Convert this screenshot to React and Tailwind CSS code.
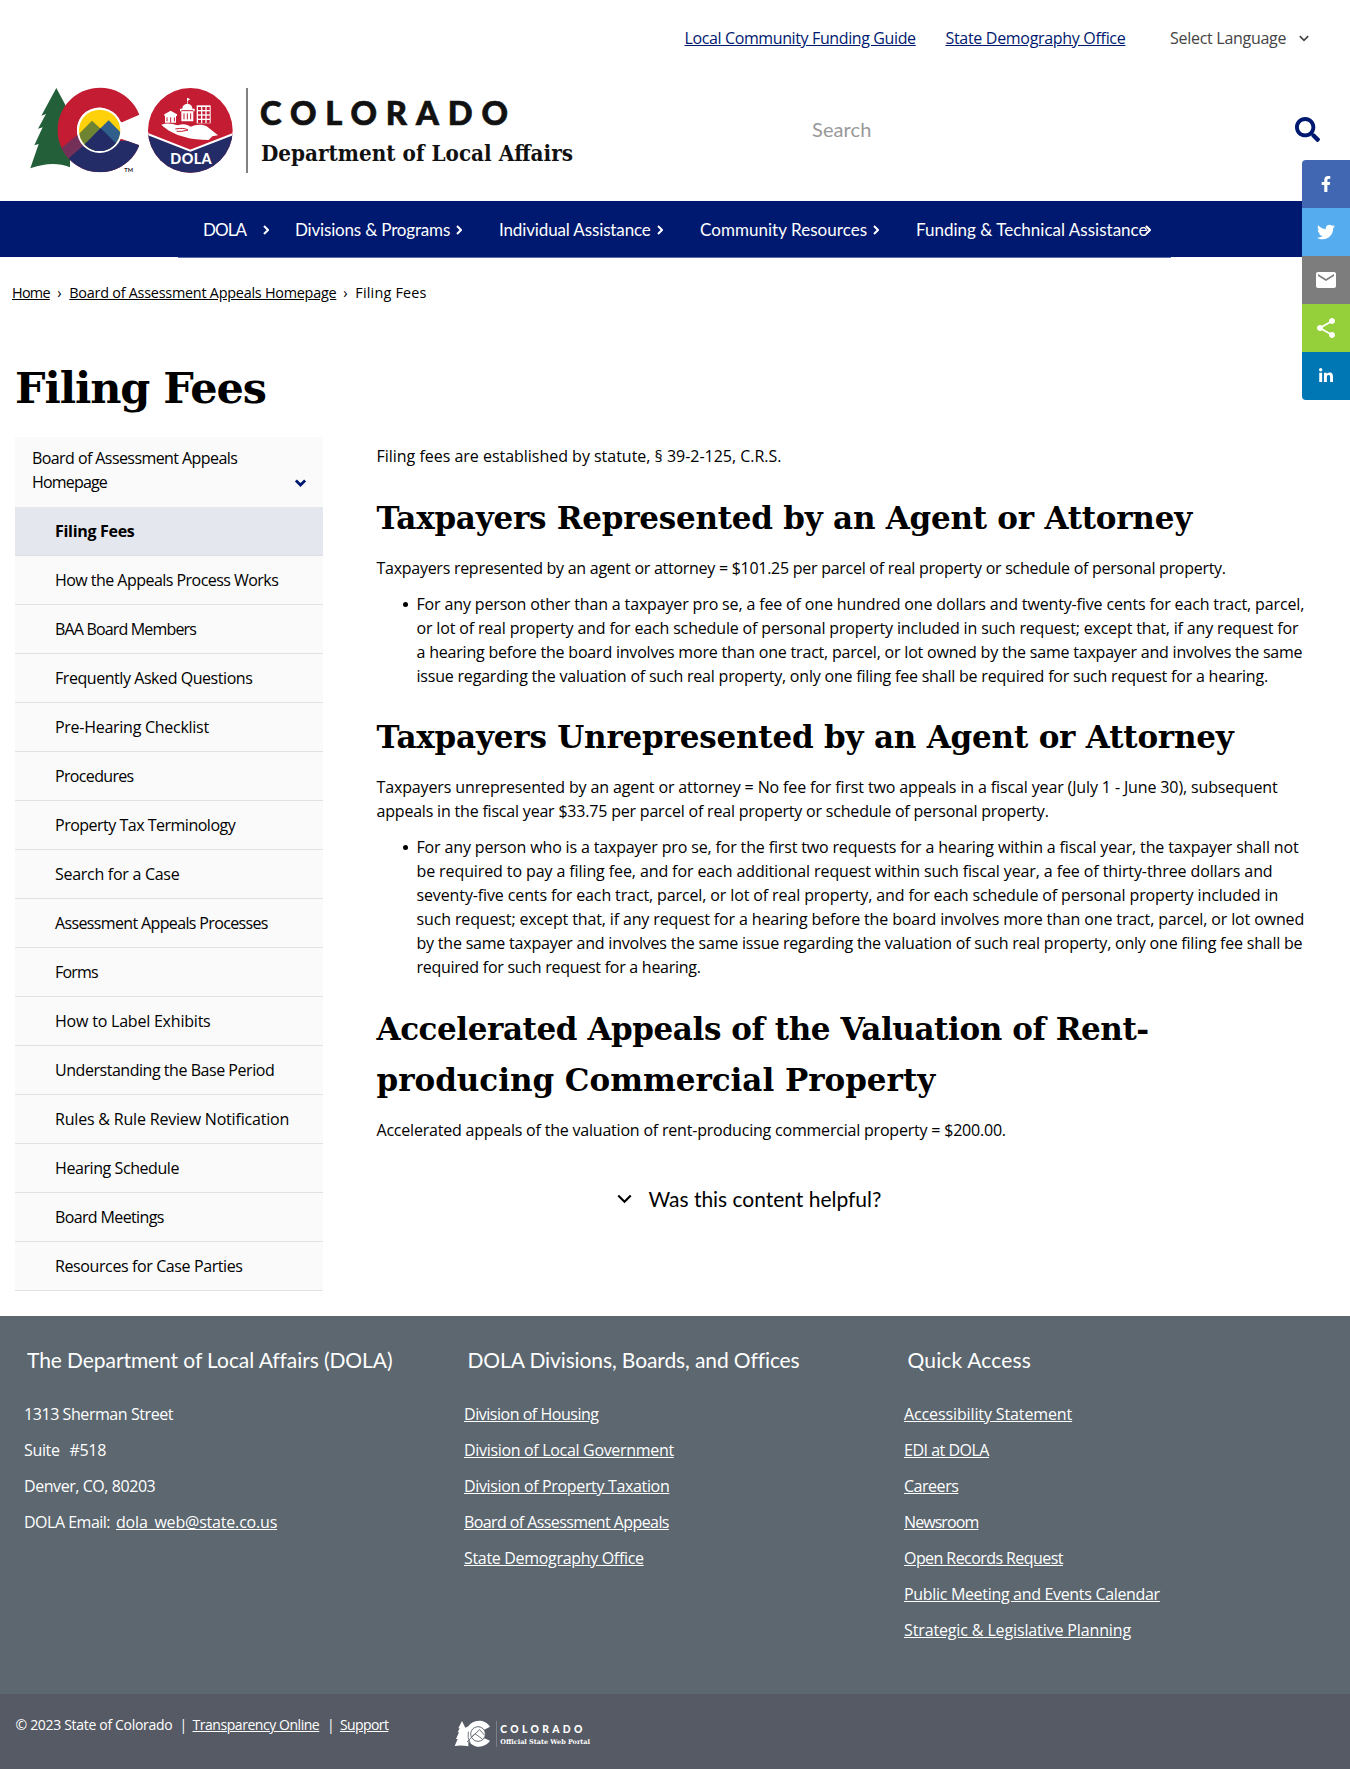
import { FaSearch, FaFacebookF, FaTwitter, FaLinkedinIn } from "react-icons/fa";
import { MdEmail, MdShare } from "react-icons/md";

const body = "font-['Open_Sans',sans-serif]";
const sans = "font-['Lato',sans-serif]";
const slab = "font-['DejaVu_Serif',serif] font-bold";

function Chevron({ className, d, w = 2 }) {
  return (
    <svg className={className} viewBox={d === "right" ? "0 0 6 10" : "0 0 12 8"} fill="none" stroke="currentColor" strokeWidth={w}>
      <path d={d === "right" ? "M1 1l4 4-4 4" : "M1 1.2l5 5 5-5"} />
    </svg>
  );
}

function HeaderLogo() {
  return (
    <svg className="block h-[100px] w-[580px] shrink-0" viewBox="0 0 1740 300">
      <path fill="#235f38" d="M109 24L141 84L133 84L150 118V262C110 246 70 252 31 265L56 192L43 196L68 142L54 146L78 102L64 107Z" />
      <defs>
        <clipPath id="letterC">
          <path d="M358 104A127 127 0 1 0 358 196L303 176L296 178A66 66 0 1 1 298 124L306 127Z" />
        </clipPath>
        <clipPath id="sun">
          <circle cx="239" cy="151" r="62" />
        </clipPath>
        <clipPath id="seal">
          <ellipse cx="511" cy="151" rx="127" ry="127" />
        </clipPath>
      </defs>
      <g clipPath="url(#letterC)">
        <rect x="100" y="10" width="270" height="280" fill="#c41c33" />
        <path fill="#743058" d="M120 208L180 158L215 190L148 242Z" />
        <path fill="#232c67" d="M140 240L200 188L250 182H380V290H120Z" />
      </g>
      <circle cx="239" cy="151" r="68" fill="#fff" />
      <g clipPath="url(#sun)">
        <rect x="170" y="80" width="140" height="140" fill="#fed10a" />
        <path fill="#6f8432" d="M216 122L160 178V220H270V172Z" />
        <path fill="#2f5f8a" d="M266 121L310 165V220H220V166Z" />
        <path fill="#232c67" d="M242 145L172 214V230H310V196L290 192Z" />
      </g>
      <text x="313" y="276" fontSize="17" fontFamily="Lato" fontWeight="700" fill="#222">TM</text>

      <g clipPath="url(#seal)">
        <rect x="380" y="20" width="262" height="262" fill="#c41c33" />
        <path fill="#232c67" d="M380 161L511 212L642 161V290H380Z" />
        <path fill="none" stroke="#fff" strokeWidth="6" d="M380 161L511 212L642 161" />
      </g>
      <g fill="#fff">
        <path d="M424 134C440 127 458 131 474 136C488 130 502 132 512 140C526 133 548 131 562 140L594 166L577 169L566 180C540 180 515 178 494 171C466 164 440 150 424 134Z" />
        <path d="M433 103L452 92L471 103V108H468V128H435V108H433Z" />
        <path d="M480 86H487C487 76 496 72 501 72V54H503L511 58L503 62V72C509 72 517 76 517 86H524V94H520V124H484V94H480Z" />
        <path d="M530 76H572V130H530Z" />
      </g>
      <path stroke="#c41c33" strokeWidth="3" fill="none" d="M492 100V118M502 100V118M512 100V118M484 92H520M441 112V124M452 112V128M463 112V124" />
      <g fill="#c41c33">
        {[81, 94, 107, 120].map((y) => [534, 547, 560].map((x) => <rect key={x + "-" + y} x={x} y={y} width="9" height="9" />))}
      </g>
      <path d="M466 147Q492 142 504 150Q484 156 470 154" stroke="#c41c33" strokeWidth="3" fill="none" />
      <text x="451" y="252" fontSize="43" fontFamily="Lato" fontWeight="900" fill="#fff" textLength="124">DOLA</text>

      <rect x="679" y="24" width="4" height="255" fill="#444" />
      <text x="720" y="134" fontSize="98" fontFamily="Lato" fontWeight="900" fill="#111" stroke="#111" strokeWidth="2" textLength="744">COLORADO</text>
      <text x="723" y="242" fontSize="64" fontFamily="DejaVu Serif" fontWeight="700" fill="#111" textLength="936" lengthAdjust="spacingAndGlyphs">Department of Local Affairs</text>
    </svg>
  );
}

function PortalLogo() {
  return (
    <svg className="block h-[34px] w-[140px]" viewBox="0 0 420 102">
      <path fill="#fff" d="M27 12L37 32L46 28V88Q24 84 5 87L14 66L9 66L18 46L14 46L20 34L16 34Z" />
      <path fill="#fff" d="M111 29A39 39 0 1 0 111 71L94 64A22 22 0 1 1 94 38Z" />
      <circle cx="75" cy="51" r="22" fill="#fff" stroke="#555a64" strokeWidth="2.5" />
      <path d="M42 75L66 50L88 66M56 60L80 38L94 54M46 44Q42 60 52 80" stroke="#555a64" strokeWidth="2.5" fill="none" />
      <rect x="129" y="12" width="1.5" height="78" fill="#a5a9af" />
      <text x="142" y="47" fontSize="31" fontFamily="Lato" fontWeight="900" fill="#fff" textLength="246">COLORADO</text>
      <text x="142" y="82" fontSize="20" fontFamily="DejaVu Serif" fontWeight="700" fill="#fff" textLength="269" lengthAdjust="spacingAndGlyphs">Official State Web Portal</text>
    </svg>
  );
}

const nav = [
  ["DOLA", "w-[92px]", "w-[60px]", "tracking-[-0.9px]"],
  ["Divisions & Programs", "w-[204px]", "w-[161px]", "tracking-[-0.176px]"],
  ["Individual Assistance", "w-[201px]", "w-[158px]", "tracking-[-0.132px]"],
  ["Community Resources", "w-[216px]", "w-[173px]", "tracking-[0.039px]"],
  ["Funding & Technical Assistance", "w-[240px]", "w-[229px]", "tracking-[0.01px]"],
];

const pages = [
  ["How the Appeals Process Works", "tracking-[-0.535px]"],
  ["BAA Board Members", "tracking-[-0.83px]"],
  ["Frequently Asked Questions", "tracking-[-0.44px]"],
  ["Pre-Hearing Checklist", "tracking-[-0.27px]"],
  ["Procedures", "tracking-[-0.66px]"],
  ["Property Tax Terminology", "tracking-[-0.5px]"],
  ["Search for a Case", "tracking-[-0.28px]"],
  ["Assessment Appeals Processes", "tracking-[-0.64px]"],
  ["Forms", "tracking-[-0.8px]"],
  ["How to Label Exhibits", "tracking-[-0.21px]"],
  ["Understanding the Base Period", "tracking-[-0.46px]"],
  ["Rules & Rule Review Notification", "tracking-[-0.19px]"],
  ["Hearing Schedule", "tracking-[-0.42px]"],
  ["Board Meetings", "tracking-[-0.63px]"],
  ["Resources for Case Parties", "tracking-[-0.39px]"],
];

const represented = [
  ["For any person other than a taxpayer pro se, a fee of one hundred one dollars and twenty-five cents for each tract, parcel,", "tracking-[-0.148px]"],
  ["or lot of real property and for each schedule of personal property included in such request; except that, if any request for", "tracking-[-0.161px]"],
  ["a hearing before the board involves more than one tract, parcel, or lot owned by the same taxpayer and involves the same", "tracking-[-0.202px]"],
  ["issue regarding the valuation of such real property, only one filing fee shall be required for such request for a hearing.", "tracking-[-0.203px]"],
];

const unrepresented = [
  ["For any person who is a taxpayer pro se, for the first two requests for a hearing within a fiscal year, the taxpayer shall not", "tracking-[-0.151px]"],
  ["be required to pay a filing fee, and for each additional request within such fiscal year, a fee of thirty-three dollars and", "tracking-[-0.102px]"],
  ["seventy-five cents for each tract, parcel, or lot of real property, and for each schedule of personal property included in", "tracking-[-0.12px]"],
  ["such request; except that, if any request for a hearing before the board involves more than one tract, parcel, or lot owned", "tracking-[-0.136px]"],
  ["by the same taxpayer and involves the same issue regarding the valuation of such real property, only one filing fee shall be", "tracking-[-0.209px]"],
  ["required for such request for a hearing.", "tracking-[-0.263px]"],
];

function Lines({ lines }) {
  return lines.map(([text, tracking]) => (
    <span key={text} className={`block whitespace-nowrap ${tracking}`}>{text}</span>
  ));
}

function Bullet({ lines }) {
  return (
    <ul className="mt-3">
      <li className="flex">
        <span className="mt-[10px] mr-[8.5px] ml-[26.5px] size-[5px] shrink-0 rounded-full bg-black" />
        <div><Lines lines={lines} /></div>
      </li>
    </ul>
  );
}

function H2({ className, children }) {
  return <h2 className={`${slab} text-[31px] leading-[51px] whitespace-nowrap ${className}`}>{children}</h2>;
}

const columns = [
  ["DOLA Divisions, Boards, and Offices", "tracking-[-0.11px]", [
    ["Division of Housing", "tracking-[-0.47px]"],
    ["Division of Local Government", "tracking-[-0.32px]"],
    ["Division of Property Taxation", "tracking-[-0.34px]"],
    ["Board of Assessment Appeals", "tracking-[-0.59px]"],
    ["State Demography Office", "tracking-[-0.32px]"],
  ]],
  ["Quick Access", "tracking-[0.15px]", [
    ["Accessibility Statement", "tracking-[-0.12px]"],
    ["EDI at DOLA", "tracking-[-0.5px]"],
    ["Careers", "tracking-[-0.47px]"],
    ["Newsroom", "tracking-[-0.92px]"],
    ["Open Records Request", "tracking-[-0.57px]"],
    ["Public Meeting and Events Calendar", "tracking-[-0.32px]"],
    ["Strategic & Legislative Planning", "tracking-[-0.13px]"],
  ]],
];

const share = [
  [FaFacebookF, "bg-[#4267b2] rounded-tl", "size-4"],
  [FaTwitter, "bg-[#55acee]", "size-[18px]"],
  [MdEmail, "bg-[#7d7d7d]", "size-6"],
  [MdShare, "bg-[#95d03a]", "size-6"],
  [FaLinkedinIn, "bg-[#0077b5] rounded-bl", "size-4"],
];

export default function App() {
  return (
    <div className={`${body} relative h-[1769px] w-[1350px] overflow-hidden bg-white text-base leading-6 text-black`}>
      <header className="h-[201px]">
        <div className="flex h-[80px] pt-[26px] pl-[684.5px] whitespace-nowrap">
          <a className="w-[261px] tracking-[-0.38px] text-[#001970] underline">Local Community Funding Guide</a>
          <a className="w-[224.5px] tracking-[-0.31px] text-[#001970] underline">State Demography Office</a>
          <span className="w-[129px] tracking-[-0.284px] text-[#444]">Select Language</span>
          <Chevron className="mt-[9px] h-[7px] w-[10px] text-[#444]" w={2} />
        </div>
        <div className="flex pl-5">
          <HeaderLogo />
          <div className="flex grow justify-between pr-[30px] pl-[212px]">
            <span className={`${sans} mt-[37px] text-[20px] tracking-[0.1px] text-[#999]`}>Search</span>
            <FaSearch className="mt-[37px] size-[25px] text-[#001970]" />
          </div>
        </div>
      </header>

      <nav className={`${sans} flex h-14 bg-[#001970] pt-[17px] pl-[203px] text-[17px] whitespace-nowrap text-white`}>
        {nav.map(([label, width, inner, tracking]) => (
          <div key={label} className={`flex ${width}`}>
            <span className={`${inner} ${tracking}`}>{label}</span>
            <Chevron d="right" className="mt-[7px] h-[10px] w-[6px] shrink-0" w={2} />
          </div>
        ))}
      </nav>
      <div className="ml-[178px] h-px w-[993px] bg-[#5f6fae]" />

      <div className="flex h-[97px] pt-[23px] pl-3 text-[14.4px] whitespace-nowrap">
        <a className="mr-[7.5px] tracking-[-0.72px] underline">Home</a>
        <span className="w-[12px]">›</span>
        <a className="w-[274px] tracking-[-0.24px] underline">Board of Assessment Appeals Homepage</a>
        <span className="w-[12px]">›</span>
        <span className="tracking-[0.2px]">Filing Fees</span>
      </div>

      <h1 className={`${slab} h-[82px] pt-px pl-[15px] text-[43px] leading-[64px] tracking-[-1.1px]`}>Filing Fees</h1>

      <div className="flex h-[879px] pl-[15px]">
        <aside className="w-[307.5px] self-start bg-[#fafafa]">
          <div className="flex h-[70px] items-start justify-between pt-[9px] pr-[16.5px] pl-[17px]">
            <div className="whitespace-nowrap">
              <span className="block tracking-[-0.576px]">Board of Assessment Appeals</span>
              <span className="block tracking-[-0.82px]">Homepage</span>
            </div>
            <Chevron className="mt-[33px] h-[8px] w-[11px] text-[#001970]" w={3} />
          </div>
          <div className="h-[49px] border-b border-[#dcdfe4] bg-[#e4e7ee] pt-3 pl-[40px] font-bold tracking-[-0.3px]">Filing Fees</div>
          {pages.map(([p, tracking]) => (
            <div key={p} className={`h-[49px] border-b border-[#e2e2e2] pt-3 pl-[40px] whitespace-nowrap ${tracking}`}>{p}</div>
          ))}
        </aside>

        <main className="ml-[54px] pt-[7px]">
          <p className="tracking-[-0.02px]">Filing fees are established by statute, § 39-2-125, C.R.S.</p>
          <H2 className="mt-[25px] tracking-[-0.245px]">Taxpayers Represented by an Agent or Attorney</H2>
          <p className="mt-3 tracking-[-0.269px]">Taxpayers represented by an agent or attorney = $101.25 per parcel of real property or schedule of personal property.</p>
          <Bullet lines={represented} />
          <H2 className="mt-6 tracking-[-0.2px]">Taxpayers Unrepresented by an Agent or Attorney</H2>
          <p className="mt-3">
            <Lines
              lines={[
                ["Taxpayers unrepresented by an agent or attorney = No fee for first two appeals in a fiscal year (July 1 - June 30), subsequent", "tracking-[-0.131px]"],
                ["appeals in the fiscal year $33.75 per parcel of real property or schedule of personal property.", "tracking-[-0.196px]"],
              ]}
            />
          </p>
          <Bullet lines={unrepresented} />
          <H2 className="mt-[25px] tracking-[-0.42px]">
            Accelerated Appeals of the Valuation of Rent-
            <br />
            <span className="tracking-[-0.02px]">producing Commercial Property</span>
          </H2>
          <p className="mt-3 tracking-[-0.204px]">Accelerated appeals of the valuation of rent-producing commercial property = $200.00.</p>
          <div className={`${sans} mt-[45px] ml-[240px] flex text-[21px]`}>
            <Chevron className="mt-[7px] mr-[17px] h-[10px] w-[15px]" w={1.7} />
            <span className="tracking-[-0.02px]">Was this content helpful?</span>
          </div>
        </main>
      </div>

      <footer className="text-white">
        <div className="flex h-[378px] bg-[#5c6770] pt-[32px] pl-6">
          <div className="w-[440px]">
            <h3 className={`${sans} mb-[30px] pl-[3px] text-[21px] tracking-[-0.08px]`}>The Department of Local Affairs (DOLA)</h3>
            <div className="flex flex-col gap-3 whitespace-pre">
              <span className="tracking-[-0.43px]">1313 Sherman Street</span>
              <span className="tracking-[-0.35px] [word-spacing:1.2px]">Suite  #518</span>
              <span className="tracking-[-0.44px]">Denver, CO, 80203</span>
              <span className="flex gap-[6px]">
                <span className="w-[86px] tracking-[-0.5px]">DOLA Email:</span>
                <a className="tracking-[-0.19px] underline">dola_web@state.co.us</a>
              </span>
            </div>
          </div>
          {columns.map(([title, tracking, links]) => (
            <div key={title} className="w-[440px]">
              <h3 className={`${sans} mb-[30px] pl-[3.5px] text-[21px] ${tracking}`}>{title}</h3>
              <div className="flex flex-col items-start gap-3">
                {links.map(([l, t]) => <a key={l} className={`underline ${t}`}>{l}</a>)}
              </div>
            </div>
          ))}
        </div>
        <div className="flex h-[75px] bg-[#555a64] pt-[19px] pl-[15.5px] text-[14px] whitespace-nowrap">
          <span className="w-[164px] tracking-[-0.315px]">© 2023 State of Colorado</span>
          <span className="w-[13px]">|</span>
          <a className="w-[134.5px] tracking-[-0.45px] underline">Transparency Online</a>
          <span className="w-[13px]">|</span>
          <a className="w-[48px] tracking-[-0.6px] underline">Support</a>
          <div className="mt-[4px] ml-[65px]"><PortalLogo /></div>
        </div>
      </footer>

      <div className="absolute top-[160px] right-0 flex w-12 flex-col text-white">
        {share.map(([Icon, cls, size]) => (
          <div key={cls} className={`flex size-12 items-center justify-center ${cls}`}>
            <Icon className={size} />
          </div>
        ))}
      </div>
    </div>
  );
}
